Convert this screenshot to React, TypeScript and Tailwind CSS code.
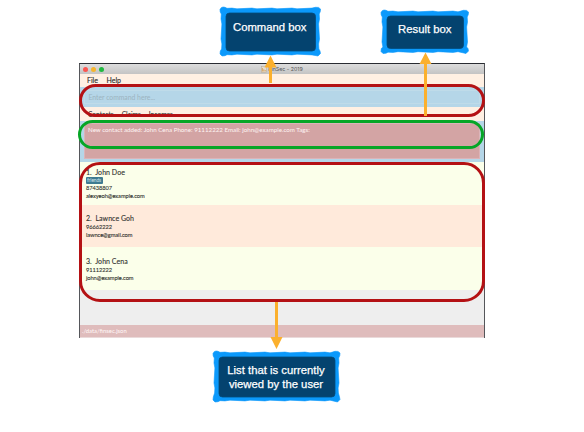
type Contact = { name: string; phone: string; email: string; tag?: string; row: string };

const contacts: Contact[] = [
  { name: "1.  John Doe", phone: "87438807", email: "alexyeoh@example.com", tag: "friends", row: "bg-[#fbffea] h-[43px] pt-[6px]" },
  { name: "2.  Lawnce Goh", phone: "96662222", email: "lawnce@gmail.com", row: "bg-[#ffeadb] h-[42px] pt-[9px]" },
  { name: "3.  John Cena", phone: "91112222", email: "john@example.com", row: "bg-[#fbffea] h-[43px] pt-[10px]" },
];

function ContactRow({ c }: { c: Contact }) {
  return (
    <div className={`shrink-0 overflow-hidden whitespace-pre pl-[6px] text-[5.7px] leading-[8px] tracking-[-0.06px] text-[#30322e] [-webkit-text-stroke:0.1px_#30322e] ${c.row}`}>
      <div className="text-[7px] leading-[9px] tracking-[0.04px]">{c.name}</div>
      {c.tag && (
        <div className="h-[7px] w-[16.5px] rounded-[1px] bg-[#3e7b91] pl-[1px] text-[4.8px] leading-[6.5px] text-[#d8e8ed] [-webkit-text-stroke:0]">{c.tag}</div>
      )}
      <div>{c.phone}</div>
      <div>{c.email}</div>
    </div>
  );
}

function Callout({ x, y, w, h, lines, pad }: { x: number; y: number; w: number; h: number; lines: string[]; pad: string }) {
  const top: string[] = [];
  const bottom: string[] = [];
  const left: string[] = [];
  const right: string[] = [];
  for (let i = 7; i < w - 6; i += 5) {
    const d = ((i * 7) % 4) * 0.25 + 1.1;
    top.push(`${i},${d}`);
    bottom.unshift(`${i},${h - d}`);
  }
  for (let i = 7; i < h - 6; i += 5) {
    const d = ((i * 3) % 4) * 0.3 + 1;
    right.push(`${w - d},${i}`);
    left.unshift(`${d},${i}`);
  }
  const border = [
    `3,0 5,0.3`, ...top, `${w - 5},0.3 ${w - 2},0.4 ${w},2 ${w - 0.2},4.5`,
    ...right, `${w - 0.5},${h - 5} ${w},${h - 2.5} ${w - 2.5},${h}`,
    ...bottom, `5,${h - 0.3} 2,${h} 0,${h - 2} 0.3,${h - 5}`, ...left, `0.2,5 0,2.5 1.2,0.7`,
  ].join(" ");
  return (
    <div className="absolute" style={{ left: x, top: y, width: w, height: h }}>
      <svg className="absolute inset-0 overflow-visible" width={w} height={h}>
        <polygon points={border} fill="#0b99fb" stroke="#0b99fb" strokeWidth="0.6" strokeLinejoin="round" />
        <rect x="6" y="6" width={w - 11} height={h - 11} rx="3.5" fill="#04436f" stroke="#034b7c" strokeWidth="0.8" />
      </svg>
      <div className={`relative text-center font-['Liberation_Sans',sans-serif] text-[11.3px] leading-[14px] text-white [-webkit-text-stroke:0.25px_white] ${pad}`}>
        {lines.map((l) => (
          <div key={l} className="whitespace-nowrap">{l}</div>
        ))}
      </div>
    </div>
  );
}

export default function App() {
  return (
    <div className="relative h-[432px] w-[584px] overflow-hidden bg-white pl-[79px] pt-[63px] font-['Lato',sans-serif]">
      <div className="flex h-[275px] w-[406px] flex-col overflow-hidden border-x border-t border-[#55565a] border-t-[#292c32]">
        <div className="relative flex h-[10px] shrink-0 items-center justify-center bg-gradient-to-b from-[#dddddd] to-[#c4c4c4] font-['Inter',sans-serif] text-[5.3px] leading-[10px] text-[#555]">
          <div className="absolute left-[3px] top-[2.5px] flex gap-[3px]">
            <i className="size-[5px] rounded-full bg-[#fb5550]" />
            <i className="size-[5px] rounded-full bg-[#f5b52e]" />
            <i className="size-[5px] rounded-full bg-[#20b940]" />
          </div>
          <svg className="mr-[1px]" width="6" height="7" viewBox="0 0 6 7">
            <rect x="0.4" y="0.4" width="5" height="6" fill="#e5ddd0" stroke="#b5a68f" strokeWidth="0.5" />
            <path d="M1.4 5.5V2M2.8 5.5V3.3M4.2 5.5V4" stroke="#d19547" strokeWidth="0.8" />
          </svg>
          <span className="whitespace-pre">FinSec - 2019</span>
        </div>
        <div className="flex h-[13px] shrink-0 gap-[8.5px] bg-[#fff0e3] pl-[7px] text-[7px] leading-[13px] text-[#242424] [-webkit-text-stroke:0.1px_#242424]">
          <span>File</span>
          <span>Help</span>
        </div>
        <div className="h-[20px] shrink-0 bg-[#b5d6e8] px-[4px] py-[3px]">
          <div className="h-[14px] border border-[#bfdbe9] pl-[3.5px] text-[6.8px] leading-[13px] text-[#9cb4c0]">Enter command here...</div>
        </div>
        <div className="flex h-[14px] shrink-0 gap-[8px] bg-[#fff0e3] pl-[8px] text-[6.6px] leading-[14px] text-[#343434] [-webkit-text-stroke:0.1px_#343434]">
          <span>Contacts</span>
          <span>Claims</span>
          <span>Incomes</span>
        </div>
        <div className="h-[41px] shrink-0 bg-[#b5d6e8] px-[4px] pb-[3px] pt-[2px]">
          <div className="h-[36px] whitespace-nowrap border border-[#dbb4b9] bg-[#d3a4a4] pl-[3px] pt-[1px] text-[6.2px] leading-[9px] text-[#fff5f4]">
            New contact added: John Cena Phone: 91112222 Email: john@example.com Tags:
          </div>
        </div>
        {contacts.map((c) => (
          <ContactRow key={c.name} c={c} />
        ))}
        <div className="min-h-0 flex-1 bg-[#eeeeee]" />
        <div className="h-[13px] shrink-0 border-b border-[#eadada] bg-[#dfbcbc] pl-[2px] text-[5.9px] leading-[12px] text-[#fff8f8]">./data/finsec.json</div>
      </div>

      <div className="absolute left-[79px] top-[84px] h-[33px] w-[406px] rounded-[17px] border-[3px] border-[#b41114]" />
      <div className="absolute left-[78px] top-[120px] h-[29px] w-[406px] rounded-[15px] border-[3px] border-[#06a626]" />
      <div className="absolute left-[79px] top-[162px] h-[140px] w-[406px] rounded-[21px] border-[3px] border-[#b41114]" />

      <Callout x={219.5} y={7} w={100.5} h={49} lines={["Command box"]} pad="pt-[13px]" />
      <Callout x={381} y={10} w={87.5} h={43.5} lines={["Result box"]} pad="pt-[12px]" />
      <Callout x={212.5} y={351} w={127} h={51} lines={["List that is currently", "viewed by the user"]} pad="pt-[12px]" />

      <svg className="absolute inset-0" width="584" height="432" fill="#fbb02d">
        <path d="M270.5 55.5l6 12H272V83h-3V67.5h-4.5z" />
        <path d="M425.5 52.5l6 11.5H427v52h-3V64h-4.5z" />
        <path d="M275 302h3v35h4.5l-6 12-6-12H275z" />
      </svg>
    </div>
  );
}
